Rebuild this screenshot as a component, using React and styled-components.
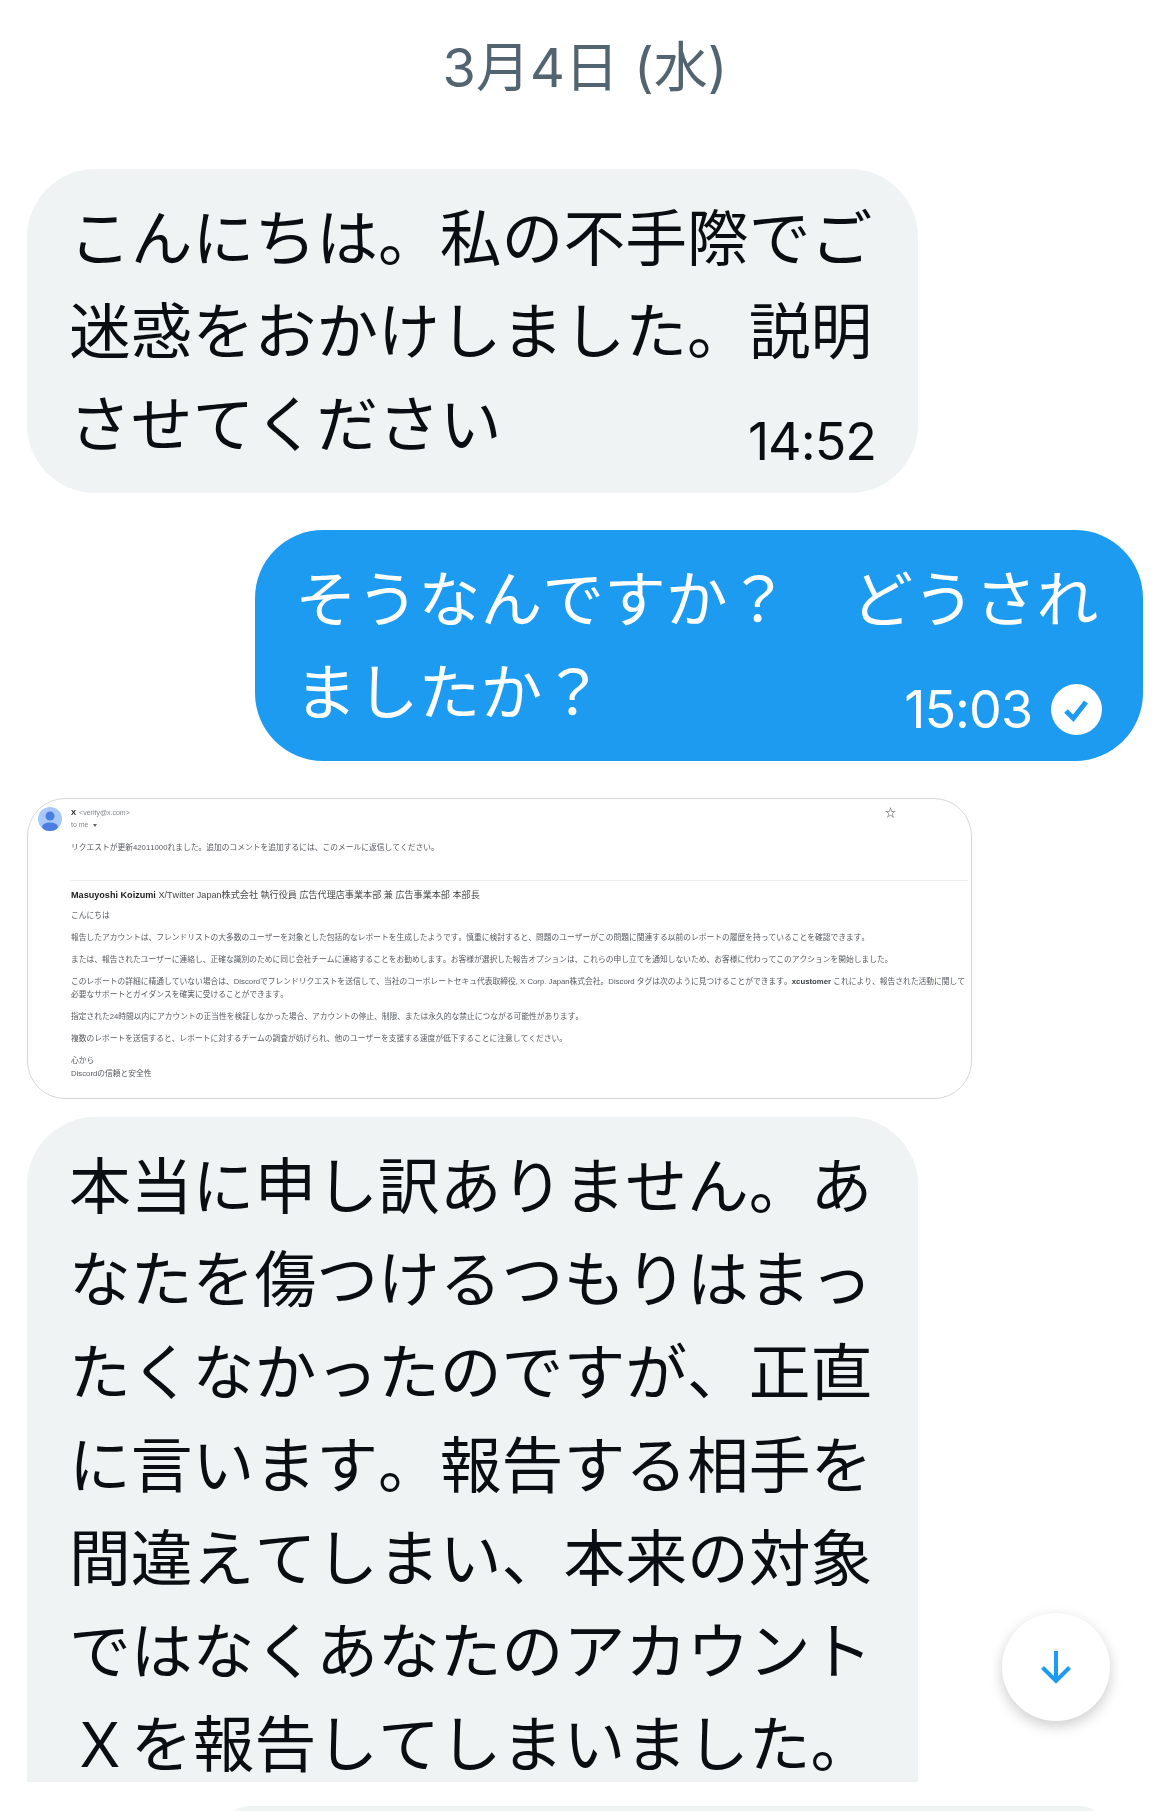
import React from 'react';
import styled, { createGlobalStyle } from 'styled-components';

const Global = createGlobalStyle`
  html, body { margin: 0; padding: 0; background: #fff; }
  body { font-family: Inter, "Noto Sans CJK JP", sans-serif; }
`;

const Page = styled.div`
  width: 1170px;
  height: 1811px;
  position: relative;
  overflow: hidden;
  background: #fff;
  font-family: "Noto Sans CJK JP", sans-serif;
  font-kerning: none;
  text-spacing-trim: space-all;
`;

const Thread = styled.div`
  height: 1782px;
  overflow: hidden;
  display: flex;
  flex-direction: column;
  box-sizing: border-box;
  padding: 0 27px;
`;

const DateLabel = styled.div`
  flex: none;
  height: 126px;
  margin-bottom: 43px;
  display: flex;
  align-items: center;
  justify-content: center;
  font-family: Inter, "Noto Sans CJK JP", sans-serif;
  font-size: 54px;
  color: #536471;
`;

const Bubble = styled.div`
  flex: none;
  box-sizing: border-box;
  width: ${p => p.$width}px;
  align-self: ${p => (p.$mine ? 'flex-end' : 'flex-start')};
  margin-bottom: ${p => (p.$open ? 0 : 37)}px;
  padding: 19px 41px ${p => (p.$open ? 0 : 26)}px ${p => (p.$mine ? 40 : 42)}px;
  border-radius: ${p => (p.$open ? '68px 68px 0 0' : '68px')};
  background: ${p => (p.$mine ? '#1d9bf0' : '#eff3f4')};
  color: ${p => (p.$mine ? '#fff' : '#0a0e12')};
  font-size: 61.8px;
  line-height: 93px;
`;

const Line = styled.div`
  white-space: pre;
  height: 93px;
`;

const LastLine = styled(Line)`
  display: flex;
  justify-content: space-between;
  align-items: flex-end;
`;

const CutLine = styled.div`
  white-space: pre;
  box-sizing: border-box;
  height: 88px;
  padding-top: 5px;
  line-height: 83px;
`;

const Meta = styled.div`
  display: flex;
  align-items: center;
  gap: 19px;
  height: 51px;
  margin-right: ${p => (p.$mine ? 0 : 1)}px;
  font-family: Inter, sans-serif;
  font-size: 52px;
  line-height: 51px;
  letter-spacing: -1px;
`;

const EmailCard = styled.div`
  flex: none;
  box-sizing: border-box;
  width: 945px;
  height: 301px;
  margin-bottom: 18px;
  border: 1px solid #d3d6d9;
  border-radius: 38px;
  background: #fff;
  padding: 8px 3px 0 10px;
  display: grid;
  grid-template-columns: 24px 1fr;
  column-gap: 9px;
  font-family: "Liberation Sans", "Noto Sans CJK JP", sans-serif;
  color: #55595e;
  font-size: 7.76px;
  line-height: 13px;
  filter: blur(0.35px);
`;

const Avatar = styled.svg`
  width: 24px;
  height: 24px;
`;

const EmailBody = styled.div`
  min-width: 0;
`;

const HeaderRow = styled.div`
  display: flex;
  justify-content: space-between;
  padding-right: 72px;
  height: 12px;
  line-height: 12px;
  font-size: 7px;
  color: #80868b;
`;

const Sender = styled.b`
  color: #202124;
  font-size: 7.6px;
  margin-right: 3px;
`;

const Star = styled.span`
  font-size: 11px;
  color: #444746;
`;

const ToMe = styled.div`
  font-size: 7px;
  line-height: 12px;
  color: #80868b;
`;

const Caret = styled.span`
  display: inline-block;
  margin-left: 4px;
  vertical-align: middle;
  border-left: 2.5px solid transparent;
  border-right: 2.5px solid transparent;
  border-top: 3px solid #5f6368;
`;

const Intro = styled.p`
  margin: 10px 0 26px;
  white-space: nowrap;
`;

const Rule = styled.hr`
  margin: 0 0 8px;
  border: 0;
  border-top: 1px solid #ececec;
`;

const Signature = styled.p`
  margin: 0 0 7px;
  white-space: nowrap;
  font-size: 9.1px;
  color: #444746;
`;

const SignatureName = styled.b`
  color: #202124;
`;

const Para = styled.p`
  margin: 0 0 9px;
  white-space: nowrap;
`;

const ParaStrong = styled.b`
  color: #3c4043;
`;

const Closing = styled.p`
  margin: 0;
  white-space: nowrap;
`;

const ScrollButton = styled.button`
  position: absolute;
  left: 1002px;
  top: 1613px;
  width: 108px;
  height: 108px;
  padding: 0;
  border: 0;
  border-radius: 50%;
  background: #fff;
  box-shadow: 0 5px 14px rgba(0, 0, 0, 0.2);
  display: flex;
  align-items: center;
  justify-content: center;
`;

const Composer = styled.div`
  position: absolute;
  left: 220px;
  top: 1806px;
  width: 889px;
  height: 60px;
  border-radius: 40px;
  background: #f0f3f4;
`;

function Check() {
  return (
    <svg width="51" height="51" viewBox="0 0 51 51" aria-hidden="true">
      <circle cx="25.5" cy="25.5" r="25.5" fill="#fff" />
      <path d="M15 27l7.300 7.300L35 18" fill="none" stroke="#1d9bf0" strokeWidth="5" />
    </svg>
  );
}

export default function App() {
  return (
    <Page>
      <Global />
      <Thread>
        <DateLabel>3月4日 (水)</DateLabel>

        <Bubble $width={891}>
          <Line>こんにちは。私の不手際でご</Line>
          <Line>迷惑をおかけしました。説明</Line>
          <LastLine>
            <span>させてください</span>
            <Meta>14:52</Meta>
          </LastLine>
        </Bubble>

        <Bubble $width={888} $mine>
          <Line>そうなんですか？　どうされ</Line>
          <LastLine>
            <span>ましたか？</span>
            <Meta $mine>15:03<Check /></Meta>
          </LastLine>
        </Bubble>

        <EmailCard>
          <Avatar viewBox="0 0 24 24" aria-hidden="true">
            <defs>
              <clipPath id="av"><circle cx="12" cy="12" r="12" /></clipPath>
            </defs>
            <circle cx="12" cy="12" r="12" fill="#a8c7fa" />
            <g clipPath="url(#av)" fill="#4a7de0">
              <circle cx="12" cy="9" r="4.5" />
              <ellipse cx="12" cy="20" rx="8" ry="4.6" />
            </g>
          </Avatar>
          <EmailBody>
            <HeaderRow>
              <span><Sender>X</Sender>&lt;verify@x.com&gt;</span>
              <Star>☆</Star>
            </HeaderRow>
            <ToMe>to me<Caret /></ToMe>
            <Intro>リクエストが更新42011000れました。追加のコメントを追加するには、このメールに返信してください。</Intro>
            <Rule />
            <Signature><SignatureName>Masuyoshi Koizumi</SignatureName> X/Twitter Japan株式会社 執行役員 広告代理店事業本部 兼 広告事業本部 本部長</Signature>
            <Para>こんにちは</Para>
            <Para>報告したアカウントは、フレンドリストの大多数のユーザーを対象とした包括的なレポートを生成したようです。慎重に検討すると、問題のユーザーがこの問題に関連する以前のレポートの履歴を持っていることを確認できます。</Para>
            <Para>または、報告されたユーザーに連絡し、正確な識別のために同じ会社チームに連絡することをお勧めします。お客様が選択した報告オプションは、これらの申し立てを通知しないため、お客様に代わってこのアクションを開始しました。</Para>
            <Para>このレポートの詳細に精通していない場合は、Discordでフレンドリクエストを送信して、当社のコーポレートセキュ代表取締役, X Corp. Japan株式会社。Discord タグは次のように見つけることができます。<ParaStrong>xcustomer</ParaStrong> これにより、報告された活動に関して<br />必要なサポートとガイダンスを確実に受けることができます。</Para>
            <Para>指定された24時間以内にアカウントの正当性を検証しなかった場合、アカウントの停止、制限、または永久的な禁止につながる可能性があります。</Para>
            <Para>複数のレポートを送信すると、レポートに対するチームの調査が妨げられ、他のユーザーを支援する速度が低下することに注意してください。</Para>
            <Closing>心から<br />Discordの信頼と安全性</Closing>
          </EmailBody>
        </EmailCard>

        <Bubble $width={891} $open>
          <Line>本当に申し訳ありません。あ</Line>
          <Line>なたを傷つけるつもりはまっ</Line>
          <Line>たくなかったのですが、正直</Line>
          <Line>に言います。報告する相手を</Line>
          <Line>間違えてしまい、本来の対象</Line>
          <Line>ではなくあなたのアカウント</Line>
          <CutLine>Ｘを報告してしまいました。</CutLine>
        </Bubble>
      </Thread>

      <ScrollButton aria-label="scroll down">
        <svg width="32" height="34" viewBox="0 0 32 34" aria-hidden="true">
          <path d="M16 1v30M2.500 17.500L16 31 29.500 17.500" fill="none" stroke="#1d9bf0" strokeWidth="4" />
        </svg>
      </ScrollButton>
      <Composer />
    </Page>
  );
}
